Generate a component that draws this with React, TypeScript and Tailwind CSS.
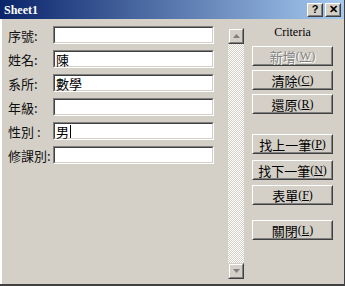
import React from "react";

const cjk = { fontFamily: '"Noto Sans CJK TC", "Noto Sans", sans-serif' };

function Field({ label, value, caret }: { label: string; value?: string; caret?: boolean }) {
  return (
    <div className="flex h-[24px] items-center">
      <div className="w-[45px] text-[13px] leading-none text-[#111]" style={cjk}>
        {label}
      </div>
      <div className="flex h-[18px] w-[161px] items-center border border-t-[#808080] border-l-[#808080] border-b-white border-r-white bg-white">
        <div className="flex h-full w-full items-center border border-t-[#404040] border-l-[#404040] border-b-[#d4d0c8] border-r-[#d4d0c8] pl-[1px] text-[13px] leading-none text-black" style={cjk}>
          {value}
          {caret && <span className="ml-[1px] inline-block h-[13px] w-px bg-black" />}
        </div>
      </div>
    </div>
  );
}

function Btn({ children, disabled, mt }: { children: React.ReactNode; disabled?: boolean; mt: string }) {
  return (
    <div className={`${mt} h-[20px] w-[81px] border border-t-white border-l-white border-b-[#404040] border-r-[#404040] bg-[#d4d0c8]`}>
      <div
        className={`flex h-full w-full items-center justify-center border border-t-[#d4d0c8] border-l-[#d4d0c8] border-b-[#808080] border-r-[#808080] text-[13px] leading-none ${disabled ? "text-[#808080] [text-shadow:1px_1px_0_#fff]" : "text-black"}`}
        style={cjk}
      >
        {children}
      </div>
    </div>
  );
}

function Acc({ k }: { k: string }) {
  return (
    <span className="text-[12px]" style={{ fontFamily: '"Liberation Serif", serif' }}>
      (<u>{k}</u>)
    </span>
  );
}

function ScrollBtn({ up }: { up?: boolean }) {
  return (
    <div className="h-[16px] w-[16px] border border-t-[#d4d0c8] border-l-[#d4d0c8] border-b-[#404040] border-r-[#404040] bg-[#d4d0c8]">
      <div className="flex h-full w-full items-center justify-center border border-t-white border-l-white border-b-[#808080] border-r-[#808080]">
        <svg width="7" height="4" viewBox="0 0 7 4">
          {up ? <path d="M3.5 0 L7 4 L0 4 Z" fill="#808080" /> : <path d="M0 0 L7 0 L3.5 4 Z" fill="#808080" />}
        </svg>
      </div>
    </div>
  );
}

export default function App() {
  return (
    <div className="flex h-[286px] w-[345px] flex-col overflow-hidden border-b-[2px] border-r-[1px] border-b-[#404040] border-r-[#404040] bg-[#d4d0c8]">
      <div className="flex h-[19px] shrink-0 items-center justify-between bg-[linear-gradient(to_right,#0a246a,#a6caf0)] pl-[4px] pr-[3px]">
        <span className="text-[12px] font-bold text-white" style={{ fontFamily: '"Liberation Serif", serif' }}>
          Sheet1
        </span>
        <div className="flex gap-[2px]">
          {["?", "✕"].map((c) => (
            <div key={c} className="h-[14px] w-[16px] border border-t-white border-l-white border-b-[#404040] border-r-[#404040] bg-[#d4d0c8]">
              <div className="flex h-full w-full items-center justify-center border border-t-[#d4d0c8] border-l-[#d4d0c8] border-b-[#808080] border-r-[#808080] text-[11px] font-bold leading-none text-black" style={{ fontFamily: '"Liberation Sans", sans-serif' }}>
                {c}
              </div>
            </div>
          ))}
        </div>
      </div>
      <div className="flex flex-1 border-l-[2px] border-l-white">
        <div className="flex flex-col pl-[6px] pt-[4px]">
          <Field label="序號:" />
          <Field label="姓名:" value="陳" />
          <Field label="系所:" value="數學" />
          <Field label="年級:" />
          <Field label="性別 :" value="男" caret />
          <Field label="修課別:" />
        </div>
        <div className="ml-[14px] mt-[9px] flex h-[251px] w-[16px] flex-col">
          <ScrollBtn up />
          <div className="flex-1 bg-[repeating-conic-gradient(#d4d0c8_0_25%,#ffffff_0_50%)] bg-[length:2px_2px]" />
          <ScrollBtn />
        </div>
        <div className="ml-[8px] flex flex-col">
          <div className="mt-[7px] w-[81px] text-center text-[12px] leading-none text-black" style={{ fontFamily: '"Liberation Serif", serif' }}>
            Criteria
          </div>
          <Btn mt="mt-[8px]" disabled>
            新增<Acc k="W" />
          </Btn>
          <Btn mt="mt-[4px]">
            清除<Acc k="C" />
          </Btn>
          <Btn mt="mt-[4px]">
            還原<Acc k="R" />
          </Btn>
          <Btn mt="mt-[20px]">
            找上一筆<Acc k="P" />
          </Btn>
          <Btn mt="mt-[6px]">
            找下一筆<Acc k="N" />
          </Btn>
          <Btn mt="mt-[5px]">
            表單<Acc k="F" />
          </Btn>
          <Btn mt="mt-[15px]">
            關閉<Acc k="L" />
          </Btn>
        </div>
      </div>
    </div>
  );
}
